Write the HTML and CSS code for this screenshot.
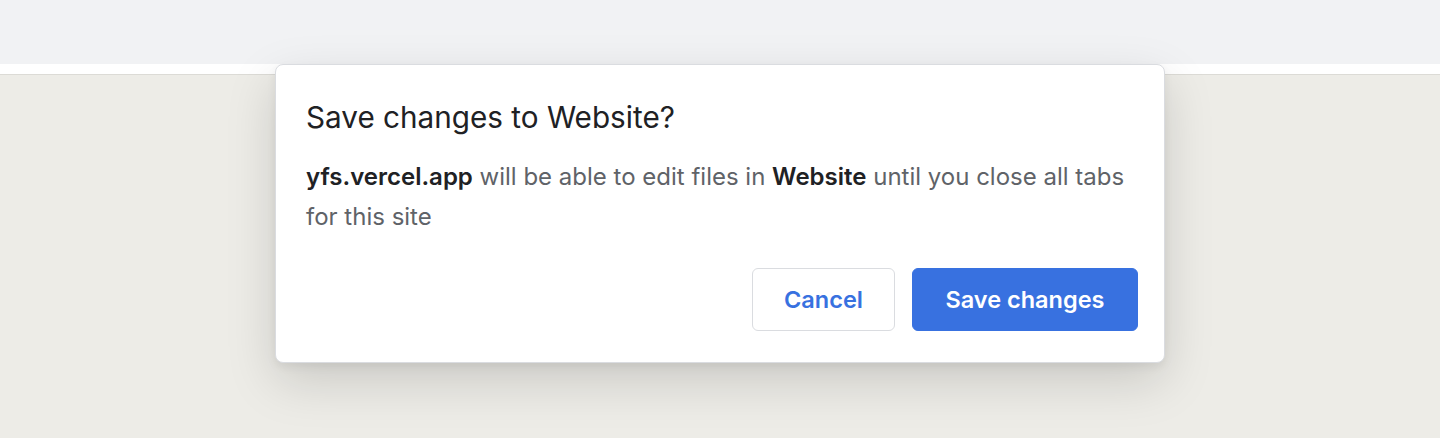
FILE: index.html
```html
<!DOCTYPE html>
<html lang="en">
<head>
<meta charset="utf-8">
<title>Save changes</title>
<link rel="stylesheet" href="styles.css">
</head>
<body>
<div class="page">
  <header class="toolbar"></header>
  <div class="strip"></div>
  <main class="content"></main>
</div>
<div class="dialog" role="dialog" aria-labelledby="dlg-title">
  <h1 class="dialog-title" id="dlg-title">Save changes to Website?</h1>
  <p class="dialog-body"><strong>yfs.vercel.app</strong> will be able to edit files in <strong>Website</strong> until you close all tabs for this site</p>
  <div class="dialog-actions">
    <button class="btn btn-secondary">Cancel</button>
    <button class="btn btn-primary">Save changes</button>
  </div>
</div>
</body>
</html>
```

FILE: styles.css
```css
* { box-sizing: border-box; }
html, body {
  margin: 0;
  padding: 0;
  height: 100%;
}
body {
  font-family: Inter, "Noto Sans", sans-serif;
  background: #edece7;
  overflow: hidden;
}
.page {
  display: flex;
  flex-direction: column;
  height: 100%;
}
.toolbar {
  height: 64px;
  background: #f1f2f4;
}
.strip {
  height: 11px;
  background: #ffffff;
  border-bottom: 1px solid #dcdbd6;
}
.content {
  flex: 1;
  background: #edece7;
}
.dialog {
  position: absolute;
  left: 275px;
  top: 64px;
  width: 890px;
  height: 299px;
  background: #ffffff;
  border: 1px solid #dadce0;
  border-radius: 8px;
  box-shadow: 0 18px 50px rgba(0, 0, 0, 0.15), 0 4px 10px rgba(0, 0, 0, 0.06);
  padding: 34px 26px 31px 30px;
  display: flex;
  flex-direction: column;
}
.dialog-title {
  margin: 0;
  font-size: 29.7px;
  font-weight: 400;
  line-height: 36px;
  color: #202124;
}
.dialog-body {
  margin: 22px 0 0;
  font-size: 24px;
  line-height: 40px;
  color: #5f6368;
}
.dialog-body strong {
  color: #202124;
  font-weight: 600;
}
.dialog-actions {
  margin-top: auto;
  display: flex;
  justify-content: flex-end;
  gap: 17px;
}
.btn {
  font-family: inherit;
  height: 63px;
  border-radius: 6px;
  font-size: 23.5px;
  font-weight: 600;
  cursor: pointer;
}
.btn-secondary {
  width: 143px;
  background: #ffffff;
  border: 1px solid #dadce0;
  color: #3871e0;
}
.btn-primary {
  width: 226px;
  background: #3871e0;
  border: 1px solid #3871e0;
  color: #ffffff;
}
```
